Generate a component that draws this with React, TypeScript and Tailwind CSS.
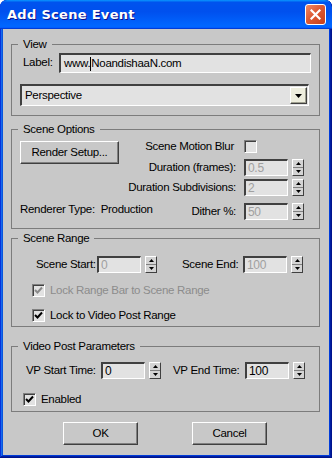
import React from "react";

const F = "font-['Liberation_Sans',Arial,sans-serif]";

function Spinner() {
  return (
    <div className="flex flex-col shrink-0 w-[12px] h-[17px] border-t border-l border-t-white border-l-white border-b border-r border-b-[#404040] border-r-[#404040] bg-[#d4d4d4]">
      <div className="flex-1 flex items-center justify-center border-b border-b-[#808080]">
        <svg width="5" height="3" viewBox="0 0 5 3"><polygon points="2.5,0 5,3 0,3" fill="#000" /></svg>
      </div>
      <div className="flex-1 flex items-center justify-center">
        <svg width="5" height="3" viewBox="0 0 5 3"><polygon points="0,0 5,0 2.5,3" fill="#000" /></svg>
      </div>
    </div>
  );
}

function NumField({ value, disabled }: { value: string; disabled?: boolean }) {
  return (
    <div className="flex items-center gap-[4px] shrink-0">
      <div
        className={`w-[44px] h-[17px] bg-[#e2e2e2] border-t-2 border-l-2 border-t-[#404040] border-l-[#404040] border-b border-r border-b-white border-r-white flex items-center pl-[2px] text-[12px] leading-none ${
          disabled ? "text-[#a0a0a0]" : "text-black"
        }`}
      >
        {value}
      </div>
      <Spinner />
    </div>
  );
}

function Check({ checked, disabled }: { checked?: boolean; disabled?: boolean }) {
  return (
    <div className="shrink-0 w-[13px] h-[13px] border border-t-[#808080] border-l-[#808080] border-b-white border-r-white shadow-[inset_1px_1px_0_#404040] bg-[#e2e2e2] flex items-center justify-center">
      {checked && (
        <svg width="9" height="9" viewBox="0 0 9 9">
          <path d="M1 4 L3.5 6.5 L8 1.5" fill="none" stroke={disabled ? "#8a8a8a" : "#000"} strokeWidth="2" />
        </svg>
      )}
    </div>
  );
}

function Group({ title, className, children }: { title: string; className: string; children: React.ReactNode }) {
  return (
    <fieldset className={`border border-[#7c7c7c] shrink-0 min-w-0 ${className}`}>
      <legend className="ml-[6px] px-[5px] leading-[14px] text-black">{title}</legend>
      {children}
    </fieldset>
  );
}

function Btn({ label, className }: { label: string; className: string }) {
  return (
    <div
      className={`shrink-0 flex items-center justify-center border border-t-white border-l-white border-b-[#404040] border-r-[#404040] shadow-[inset_-1px_-1px_0_#808080] bg-[#c8c8c8] text-black ${className}`}
    >
      {label}
    </div>
  );
}

export default function App() {
  return (
    <div className={`${F} w-[332px] h-[458px] flex flex-col bg-[#0831d9] rounded-t-[7px] overflow-hidden shadow-[inset_-1px_-1px_#00138c,inset_1px_1px_#0831d9,inset_-2px_-2px_#001ea0,inset_2px_2px_#166aee,inset_-3px_-3px_#003bda,inset_3px_3px_#0855dd]`}>
      {/* Title bar */}
      <div className="h-[29px] shrink-0 flex items-center justify-between pl-[7px] pr-[6px] bg-[linear-gradient(180deg,#0997ff,#0053ee_8%,#0050ee_40%,#06f_88%,#06f_93%,#005bff_95%,#003dd7_96%,#003dd7)] rounded-t-[7px]">
        <span className="text-white font-bold text-[13px] tracking-[0.3px] [text-shadow:1px_1px_#0f1089] font-['DejaVu_Sans',sans-serif]">
          Add Scene Event
        </span>
        <div className="w-[21px] h-[21px] rounded-[3px] border border-white bg-[linear-gradient(135deg,#f08a66_0%,#dd5a34_45%,#c83f1a_100%)] flex items-center justify-center">
          <svg width="11" height="11" viewBox="0 0 11 11">
            <path d="M1.5 1.5 L9.5 9.5 M9.5 1.5 L1.5 9.5" stroke="#fff" strokeWidth="2.2" strokeLinecap="square" />
          </svg>
        </div>
      </div>

      {/* Body */}
      <div className="flex-1 mx-[3px] mb-[3px] bg-[#c8c8c8] flex flex-col pl-[8px] pt-[8px] text-[11.5px] tracking-[-0.3px] text-black whitespace-nowrap">
        {/* View */}
        <Group title="View" className="w-[309px] h-[79px]">
          <div className="pl-[8px]">
            <div className="flex items-center mt-[2px]">
              <span className="w-[39px] pl-[3px] shrink-0">Label:</span>
              <div className="w-[252px] h-[20px] shrink-0 bg-[#e2e2e2] border-t-2 border-l-2 border-t-[#404040] border-l-[#404040] border-b border-r border-b-white border-r-white flex items-center pl-[3px]">
                <span>www.</span>
                <span className="w-[1px] h-[14px] bg-black" />
                <span>NoandishaaN.com</span>
              </div>
            </div>
            <div className="mt-[11px] w-[289px] h-[22px] bg-[#e2e2e2] border-t-2 border-l-2 border-t-[#404040] border-l-[#404040] border-b border-r border-b-white border-r-white flex items-center justify-between pl-[3px] pr-[1px]">
              <span>Perspective</span>
              <div className="w-[17px] h-[17px] bg-[#eeeede] border border-t-white border-l-white border-b-[#404040] border-r-[#404040] shadow-[inset_-1px_-1px_0_#a0a090] flex items-center justify-center">
                <svg width="7" height="4" viewBox="0 0 7 4"><polygon points="0,0 7,0 3.5,4" fill="#000" /></svg>
              </div>
            </div>
          </div>
        </Group>

        {/* Scene Options */}
        <Group title="Scene Options" className="w-[309px] h-[107px] mt-[6px]">
          <div className="flex pl-[8px] pr-[15px] h-[84px]">
            <div className="w-[99px] flex flex-col justify-between pt-[5px] pb-[4px] shrink-0">
              <Btn label="Render Setup..." className="w-[99px] h-[23px]" />
              <span className="leading-[14px]">Renderer Type:&nbsp; Production</span>
            </div>
            <div className="flex-1 min-w-0 flex flex-col items-end pt-[4px]">
              <div className="flex items-center h-[13px]">
                <span className="mr-[10px]">Scene Motion Blur</span>
                <div className="w-[60px]"><Check /></div>
              </div>
              <div className="flex items-center mt-[6px]">
                <span className="mr-[8px]">Duration (frames):</span>
                <NumField value="0.5" disabled />
              </div>
              <div className="flex items-center mt-[3px]">
                <span className="mr-[8px]">Duration Subdivisions:</span>
                <NumField value="2" disabled />
              </div>
              <div className="flex items-center mt-[6px]">
                <span className="mr-[8px]">Dither %:</span>
                <NumField value="50" disabled />
              </div>
            </div>
          </div>
        </Group>

        {/* Scene Range */}
        <Group title="Scene Range" className="w-[309px] h-[96px] mt-[2px]">
          <div className="pl-[20px]">
            <div className="flex items-center mt-[11px]">
              <span className="w-[65px] pl-[4px] shrink-0">Scene Start:</span>
              <NumField value="0" disabled />
              <span className="w-[61px] ml-[25px] shrink-0">Scene End:</span>
              <NumField value="100" disabled />
            </div>
            <div className="flex items-center mt-[9px]">
              <Check checked disabled />
              <span className="ml-[5px] text-[#8c8c8c]">Lock Range Bar to Scene Range</span>
            </div>
            <div className="flex items-center mt-[7px]">
              <Check checked />
              <span className="ml-[5px]">Lock to Video Post Range</span>
            </div>
          </div>
        </Group>

        {/* Video Post Parameters */}
        <Group title="Video Post Parameters" className="w-[309px] h-[73px] mt-[12px]">
          <div className="pl-[11px]">
            <div className="flex items-center mt-[9px]">
              <span className="w-[78px] pl-[3px] shrink-0">VP Start Time:</span>
              <NumField value="0" />
              <span className="w-[72px] ml-[12px] shrink-0">VP End Time:</span>
              <NumField value="100" />
            </div>
            <div className="flex items-center mt-[12px]">
              <Check checked />
              <span className="ml-[5px]">Enabled</span>
            </div>
          </div>
        </Group>

        {/* Buttons */}
        <div className="flex mt-[10px] pl-[52px] gap-[54px]">
          <Btn label="OK" className="w-[75px] h-[23px]" />
          <Btn label="Cancel" className="w-[75px] h-[23px]" />
        </div>
      </div>
    </div>
  );
}
